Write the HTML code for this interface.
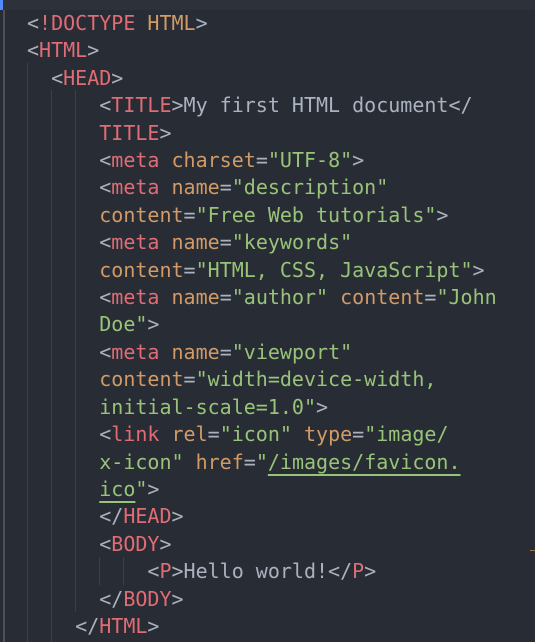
<!DOCTYPE html>
<html><head><style>
body{margin:0;width:535px;height:642px;background:#282c34;overflow:hidden;position:relative;font-family:"DejaVu Sans Mono","Liberation Mono",monospace;font-size:20px;color:#abb2bf}
.top{position:absolute;left:0;top:0;width:535px;height:10px;background:#2c313a}
.blue{position:absolute;left:0;top:0;width:3px;height:10px;background:#528bff}
.g{position:absolute;width:1px;background:#3b4048}
pre{position:absolute;left:27px;top:10px;margin:0;font:inherit;line-height:27.4px;white-space:pre}
.t{color:#e06c75}.a{color:#d19a66}.s{color:#98c379}
.u{text-decoration:underline;text-decoration-color:#98c379;text-underline-offset:5px;text-decoration-thickness:2px}
</style></head><body>
<div class="top"></div><div class="blue"></div>
<div class="g" style="left:3px;top:10px;height:632px;background:#4b5059;width:2px"></div>
<div class="g" style="left:27px;top:63px;height:579px"></div>
<div class="g" style="left:51px;top:90px;height:552px"></div>
<div class="g" style="left:75px;top:90px;height:522px"></div>
<div class="g" style="left:99px;top:557px;height:28px"></div>
<div class="g" style="left:123px;top:557px;height:28px"></div>
<div style="position:absolute;left:530px;top:550px;width:5px;height:1px;background:#a07a3c"></div>
<pre>&lt;<span class="t">!DOCTYPE</span> <span class="a">HTML</span>&gt;
&lt;<span class="t">HTML</span>&gt;
  &lt;<span class="t">HEAD</span>&gt;
      &lt;<span class="t">TITLE</span>&gt;My first HTML document&lt;/
      <span class="t">TITLE</span>&gt;
      &lt;<span class="t">meta</span> <span class="a">charset</span>=<span class="s">"UTF-8"</span>&gt;
      &lt;<span class="t">meta</span> <span class="a">name</span>=<span class="s">"description"</span>
      <span class="a">content</span>=<span class="s">"Free Web tutorials"</span>&gt;
      &lt;<span class="t">meta</span> <span class="a">name</span>=<span class="s">"keywords"</span>
      <span class="a">content</span>=<span class="s">"HTML, CSS, JavaScript"</span>&gt;
      &lt;<span class="t">meta</span> <span class="a">name</span>=<span class="s">"author"</span> <span class="a">content</span>=<span class="s">"John</span>
      <span class="s">Doe"</span>&gt;
      &lt;<span class="t">meta</span> <span class="a">name</span>=<span class="s">"viewport"</span>
      <span class="a">content</span>=<span class="s">"width=device-width,</span>
      <span class="s">initial-scale=1.0"</span>&gt;
      &lt;<span class="t">link</span> <span class="a">rel</span>=<span class="s">"icon"</span> <span class="a">type</span>=<span class="s">"image/</span>
      <span class="s">x-icon"</span> <span class="a">href</span>=<span class="s">"<span class="u">/images/favicon.</span></span>
      <span class="s"><span class="u">ico</span>"</span>&gt;
      &lt;/<span class="t">HEAD</span>&gt;
      &lt;<span class="t">BODY</span>&gt;
          &lt;<span class="t">P</span>&gt;Hello world!&lt;/<span class="t">P</span>&gt;
      &lt;/<span class="t">BODY</span>&gt;
    &lt;/<span class="t">HTML</span>&gt;</pre>
</body></html>
